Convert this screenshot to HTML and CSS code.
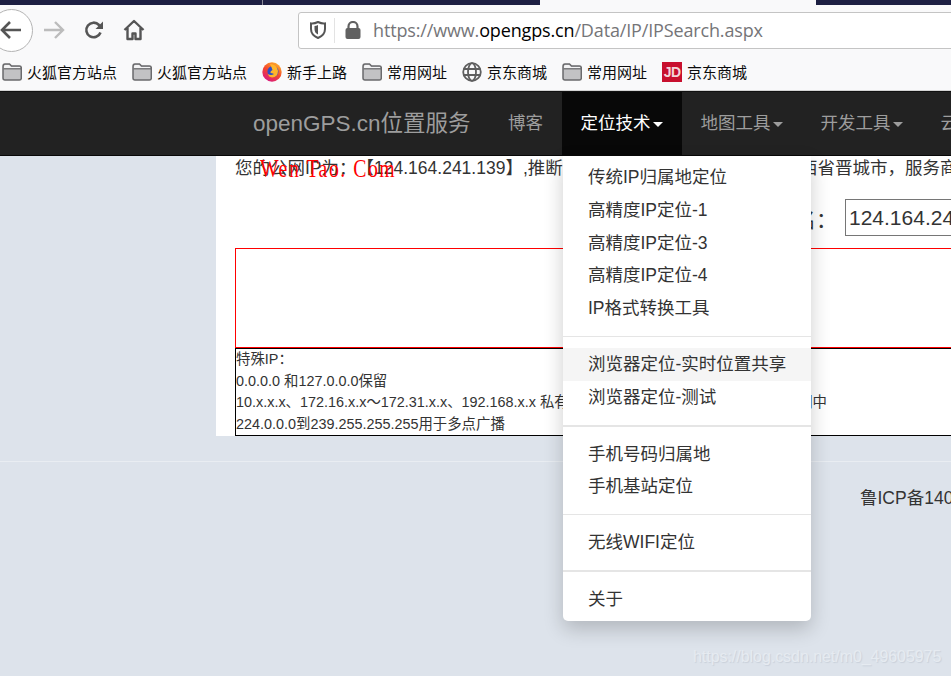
FILE: index.html
```html
<!DOCTYPE html>
<html lang="zh-CN">
<head>
<meta charset="utf-8">
<title>IP定位</title>
<link rel="stylesheet" href="styles.css">
</head>
<body>
<div class="page">
  <svg width="0" height="0" class="defs"><defs>
    <symbol id="folder" viewBox="0 0 20 18"><path d="M1 3.500Q1 1 3 1H7.500L9.500 3H17.500Q19.300 3 19.300 5V15Q19.300 17 17.500 17H3Q1 17 1 15Z" fill="#c2c2c4" stroke="#6a6a6c" stroke-width="1.500"/><path d="M1.500 5.800H19" stroke="#6a6a6c" stroke-width="1.200" fill="#fff"/><path d="M2 3.500Q2 2 3.500 2H7L9 4H18V5H2Z" fill="#f3f3f4"/></symbol>
  </defs></svg>
  <div class="tabstrip">
    <div class="tab-dark tab-a"></div>
    <div class="tab-dark tab-b"></div>
    <div class="tab-light"></div>
    <div class="tab-dark tab-c"></div>
  </div>
  <div class="toolbar">
    <div class="back">
      <svg width="22" height="20" viewBox="0 0 22 20"><path d="M21 10H2M10 2 2 10 10 18" fill="none" stroke="#555" stroke-width="2.600"/></svg>
    </div>
    <svg class="tb-forward" width="22" height="20" viewBox="0 0 22 20"><path d="M1 10H20M12 2 20 10 12 18" fill="none" stroke="#bcbcbc" stroke-width="2.400"/></svg>
    <svg class="tb-reload" width="22" height="22" viewBox="0 0 22 22"><path d="M17.500 13.500A7.300 7.300 0 1 1 16 6L18 8" fill="none" stroke="#555" stroke-width="2.600"/><path d="M20 2.500V10H12.500Z" fill="#555"/></svg>
    <svg class="tb-home" width="22" height="22" viewBox="0 0 22 22"><path d="M1.500 11 11 2 20.500 11M4.500 9V20H9.500V14.500H12.500V20H17.500V9" fill="none" stroke="#555" stroke-width="2.400" stroke-linejoin="round"/></svg>
    <div class="urlbar">
      <svg class="shield" width="16" height="18" viewBox="0 0 16 18"><path d="M8 1Q12 3 15 2.500V8Q15 14 8 17 1 14 1 8V2.500Q4 3 8 1Z" fill="none" stroke="#555" stroke-width="2"/><path d="M8 4Q6 5 4.500 5V8Q4.500 12 8 13.500Z" fill="#555"/></svg>
      <span class="url-sep"></span>
      <svg class="lock" width="16" height="18" viewBox="0 0 16 18"><rect x="0.500" y="7" width="15" height="11" rx="2" fill="#616161"/><path d="M3.500 8V5.500A4.500 4.500 0 0 1 12.500 5.500V8" fill="none" stroke="#616161" stroke-width="2.200"/></svg>
      <span class="url"><span class="url-dim">https://www.</span>opengps.cn<span class="url-dim">/Data/IP/IPSearch.aspx</span></span>
    </div>
  </div>
  <div class="bookmarks">
    <a class="bm"><svg class="bm-ico" viewBox="0 0 20 18"><use href="#folder"/></svg>火狐官方站点</a>
    <a class="bm"><svg class="bm-ico" viewBox="0 0 20 18"><use href="#folder"/></svg>火狐官方站点</a>
    <a class="bm"><svg class="bm-ico bm-round" viewBox="0 0 20 20"><defs><linearGradient id="fx" x1="0.800" y1="0" x2="0.200" y2="1"><stop offset="0" stop-color="#ffb52a"/><stop offset="0.500" stop-color="#f4472c"/><stop offset="1" stop-color="#d6158a"/></linearGradient></defs><circle cx="10" cy="10" r="9.700" fill="url(#fx)"/><circle cx="11" cy="9.500" r="5.500" fill="#2d4fc7"/><path d="M8 2Q15 2 16 9 16 15 10 15.500 6.500 15 6 12 9 14 12 12 10 11 8.500 11 8 9 10.500 8 9.500 5 8 2Z" fill="#ffb52a"/></svg>新手上路</a>
    <a class="bm"><svg class="bm-ico" viewBox="0 0 20 18"><use href="#folder"/></svg>常用网址</a>
    <a class="bm"><svg class="bm-ico bm-round" viewBox="0 0 20 20"><g fill="none" stroke="#5f5f5f" stroke-width="1.800"><circle cx="10" cy="10" r="8.800"/><ellipse cx="10" cy="10" rx="4" ry="8.800"/><path d="M1.500 7H18.500M1.500 13H18.500"/></g></svg>京东商城</a>
    <a class="bm"><svg class="bm-ico" viewBox="0 0 20 18"><use href="#folder"/></svg>常用网址</a>
    <a class="bm"><span class="jd">JD</span>京东商城</a>
  </div>
  <nav class="navbar">
    <a class="brand">openGPS.cn位置服务</a>
    <a class="nav-item">博客</a>
    <a class="nav-item active">定位技术<i class="caret"></i></a>
    <a class="nav-item">地图工具<i class="caret"></i></a>
    <a class="nav-item">开发工具<i class="caret"></i></a>
    <a class="nav-item">云</a>
  </nav>
  <main class="main">
    <section class="panel">
      <p class="info">您的公网IP为：【124.164.241.139】,推断您所在的大概位置, 即：中国山西省晋城市，服务商为联通</p>
      <form class="query">
        <label class="query-label">IP或域名：</label>
        <input class="query-input" value="124.164.241.139">
      </form>
      <div class="mapbox"></div>
      <div class="notes">
        <div>特殊IP：</div>
        <div>0.0.0.0 和127.0.0.0保留</div>
        <div>10.x.x.x、172.16.x.x～172.31.x.x、192.168.x.x 私有地址，主要用于LAN，不会出现在公网中</div>
        <div>224.0.0.0到239.255.255.255用于多点广播</div>
      </div>
    </section>
    <footer class="footer">鲁ICP备14012345号</footer>
  </main>
  <span class="wm-red">Wen Tao. Com</span>
  <ul class="dropdown">
    <li>传统IP归属地定位</li>
    <li>高精度IP定位-1</li>
    <li>高精度IP定位-3</li>
    <li>高精度IP定位-4</li>
    <li>IP格式转换工具</li>
    <li class="divider"></li>
    <li class="hover">浏览器定位-实时位置共享</li>
    <li>浏览器定位-测试</li>
    <li class="divider thick"></li>
    <li>手机号码归属地</li>
    <li>手机基站定位</li>
    <li class="divider"></li>
    <li>无线WIFI定位</li>
    <li class="divider thick"></li>
    <li>关于</li>
  </ul>
  <span class="wm-csdn">https://blog.csdn.net/m0_49605975</span>
</div>
</body>
</html>
```
FILE: styles.css
```css
* { box-sizing: border-box; }
html, body { margin: 0; padding: 0; }
body {
  font-family: "Liberation Sans", "Noto Sans CJK SC", sans-serif;
  color: #333;
  background: #dde3eb;
}
.defs { position: absolute; }
.page {
  position: relative;
  width: 951px;
  height: 676px;
  overflow: hidden;
  background: #dde3eb;
}

/* browser chrome */
.tabstrip { display: flex; height: 5px; background: #f9f9fa; }
.tab-dark { background: #1d1f42; }
.tab-a { width: 263px; border-right: 1px solid #8a8a98; }
.tab-b { width: 277px; }
.tab-light { width: 276px; }
.tab-c { width: 135px; }

.toolbar {
  display: flex;
  align-items: center;
  height: 50px;
  background: #f9f9fa;
}
.back {
  width: 43px;
  height: 43px;
  margin-left: -10px;
  flex: none;
  border: 1px solid #b4b4b4;
  border-radius: 50%;
  background: #fff;
  display: flex;
  align-items: center;
  padding-left: 9px;
}
.tb-forward { margin-left: 10px; flex: none; }
.tb-reload { margin-left: 18px; flex: none; }
.tb-home { margin-left: 18px; flex: none; }
.urlbar {
  display: flex;
  align-items: center;
  width: 700px;
  height: 37px;
  margin-left: 153px;
  flex: none;
  background: #fff;
  border: 1px solid #c4c4c4;
  border-radius: 3px;
}
.shield { margin-left: 11px; flex: none; }
.url-sep { width: 1px; height: 25px; margin-left: 8px; background: #e3e3e3; flex: none; }
.lock { margin-left: 10px; flex: none; }
.url {
  margin-left: 12px;
  font: 18px/1 "Open Sans", sans-serif;
  letter-spacing: -0.150px;
  color: #000;
  white-space: nowrap;
}
.url-dim { color: #757578; }

.bookmarks {
  display: flex;
  align-items: center;
  gap: 15px;
  height: 36px;
  padding: 0 0 2px 2px;
  background: #f9f9fa;
  border-bottom: 1px solid #d4d4d4;
}
.bm {
  display: flex;
  align-items: center;
  gap: 5px;
  font-size: 15px;
  color: #0c0c0d;
  white-space: nowrap;
}
.bm-ico { width: 20px; height: 18px; flex: none; }
.bm-round { height: 20px; }
.jd {
  display: block;
  width: 20px;
  height: 20px;
  background: #c8102e;
  color: #f3d6da;
  font-size: 14px;
  font-weight: bold;
  line-height: 20px;
  text-align: center;
  letter-spacing: -0.500px;
}

/* navbar */
.navbar {
  display: flex;
  align-items: stretch;
  height: 65px;
  padding-left: 253px;
  background: #222;
  border-top: 1px solid #111;
  border-bottom: 1px solid #080808;
  overflow: hidden;
  white-space: nowrap;
}
.brand {
  flex: none;
  width: 236.250px;
  font-size: 22.500px;
  line-height: 63px;
  color: #9d9d9d;
}
.nav-item {
  flex: none;
  padding: 0 18.750px;
  font-size: 17.500px;
  line-height: 63px;
  color: #9d9d9d;
}
.nav-item.active { background: #080808; color: #fff; }
.caret {
  display: inline-block;
  width: 0;
  height: 0;
  margin-left: 2.500px;
  vertical-align: middle;
  border-top: 5px solid;
  border-left: 5px solid transparent;
  border-right: 5px solid transparent;
}

/* content */
.main { display: block; }
.panel {
  width: 900px;
  height: 280px;
  margin-left: 216px;
  padding-left: 19px;
  background: #fff;
}
.info {
  margin: 0;
  font-size: 17.500px;
  line-height: 25px;
  white-space: nowrap;
  text-spacing-trim: space-all;
}
.query {
  display: flex;
  align-items: center;
  height: 37px;
  margin-top: 18px;
}
.query-label {
  flex: none;
  width: 602px;
  margin-right: 8px;
  font-size: 21px;
  text-align: right;
  white-space: nowrap;
}
.query-input {
  flex: none;
  width: 200px;
  height: 37px;
  padding: 0 3px;
  border: 1px solid #767676;
  font: 21px "Liberation Sans", sans-serif;
  color: #333;
  background: #fff;
}
.mapbox {
  height: 100px;
  margin-top: 12px;
  border: 1px solid #f00;
}
.notes {
  height: 88px;
  border: 1px solid #000;
  font-size: 14.400px;
  line-height: 21.500px;
  white-space: nowrap;
}
.footer {
  margin-top: 25px;
  padding: 24px 0 0 860px;
  height: 60px;
  border-top: 1px solid #e9edf2;
  font-size: 17.500px;
  line-height: 25px;
  white-space: nowrap;
  overflow: hidden;
}

/* overlays */
.wm-red {
  position: absolute;
  left: 260px;
  top: 154px;
  font: 26px "Liberation Serif", serif;
  letter-spacing: 2px;
  color: #f00;
  white-space: nowrap;
  transform: scaleX(0.76);
  transform-origin: left top;
}
.dropdown {
  position: absolute;
  left: 563px;
  top: 156px;
  width: 248px;
  margin: 0;
  padding: 5px 0;
  list-style: none;
  background: #fff;
  border-radius: 0 0 5px 5px;
  box-shadow: 0 8px 20px rgba(0, 0, 0, 0.2);
}
.dropdown li {
  height: 32.800px;
  padding-left: 25px;
  font-size: 17.500px;
  line-height: 33px;
  white-space: nowrap;
}
.dropdown li.hover { background: #f5f5f5; }
.dropdown li.divider {
  height: 1px;
  margin: 11px 0;
  background: #e5e5e5;
  padding: 0;
}
.dropdown li.divider.thick { height: 2px; }
.wm-csdn {
  position: absolute;
  left: 693px;
  top: 648px;
  font-size: 15.900px;
  line-height: 18px;
  color: #e6ebf1;
  text-shadow: 1px 1px 1px #c9d0da;
  white-space: nowrap;
}
```
